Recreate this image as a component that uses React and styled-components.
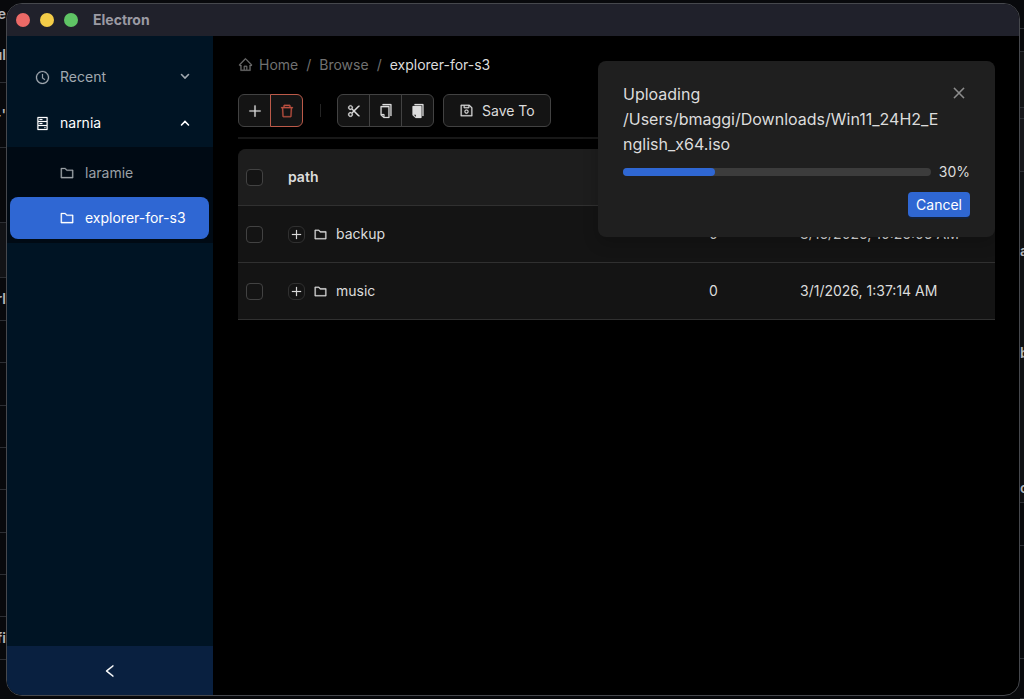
import React from "react";
import styled, { createGlobalStyle } from "styled-components";
import {
  AiOutlineClockCircle,
  AiOutlineHdd,
  AiOutlineFolder,
  AiOutlineHome,
  AiOutlinePlus,
  AiOutlineDelete,
  AiOutlineScissor,
  AiOutlineCopy,
  AiFillCopy,
  AiOutlineSave,
  AiOutlineLeft,
  AiOutlineClose,
} from "react-icons/ai";

const GlobalStyle = createGlobalStyle`
  * { box-sizing: border-box; }
  body {
    margin: 0;
    background: #08090c;
    color: #dcdcdc;
    font-family: Inter, "Liberation Sans", sans-serif;
    font-size: 14px;
    line-height: 22px;
  }
  button {
    font: inherit;
    color: inherit;
    cursor: pointer;
  }
  svg {
    flex: none;
    stroke-width: 16;
  }
`;

const Desktop = styled.div`
  display: grid;
  grid-template-columns: 6px 1fr 4px;
  height: 100vh;
  overflow: hidden;
`;

const Strip = styled.div`
  display: flex;
  flex-direction: column;
  overflow: hidden;
  min-width: 0;
`;

const StripCell = styled.div`
  display: flex;
  align-items: center;
  justify-content: ${({ $end }) => ($end ? "flex-end" : "flex-start")};
  flex: 0 0 ${({ $h }) => $h}px;
  border-bottom: ${({ $plain }) => ($plain ? "0" : "1px solid #2c2e33")};
  background: ${({ $bg }) => $bg || "transparent"};
  color: #b4b6ba;
  font-weight: 600;
  white-space: nowrap;
`;

const Window = styled.div`
  position: relative;
  display: flex;
  flex-direction: column;
  margin: 3px 0;
  border: 1px solid #46484d;
  border-radius: 16px;
  background: #000;
  overflow: hidden;
`;

const TitleBar = styled.header`
  display: flex;
  align-items: center;
  gap: 10px;
  flex: 0 0 32px;
  padding-left: 9px;
  background: #20212b;
`;

const Light = styled.button`
  width: 14px;
  height: 14px;
  padding: 0;
  border: 0;
  border-radius: 50%;
  background: ${({ $color }) => $color};
`;

const WindowTitle = styled.span`
  margin-left: 5px;
  color: #9b9aa3;
  font-weight: 700;
`;

const Body = styled.div`
  display: flex;
  flex: 1;
  min-height: 0;
`;

const Sider = styled.aside`
  display: flex;
  flex-direction: column;
  flex: 0 0 206px;
  background: #001424;
`;

const Menu = styled.nav`
  display: flex;
  flex-direction: column;
  flex: 1;
  padding-top: 18px;
`;

const MenuTitle = styled.button`
  display: flex;
  align-items: center;
  height: 46px;
  padding: 0 22px 0 28px;
  border: 0;
  background: none;
  color: ${({ $open }) => ($open ? "#fff" : "#a1a9b0")};
  text-align: left;

  span {
    flex: 1;
    margin-left: 10px;
  }
`;

const SubMenu = styled.div`
  display: flex;
  flex-direction: column;
  gap: 3px;
  margin-top: 1px;
  padding: 5px 4px 4px 3px;
  background: #000a14;
`;

const MenuItem = styled.a`
  display: flex;
  align-items: center;
  gap: 10px;
  height: 42px;
  padding-left: 49px;
  border-radius: 8px;
  background: ${({ $active }) => ($active ? "#2f67d3" : "transparent")};
  color: ${({ $active }) => ($active ? "#fff" : "#9aa0a6")};
  text-decoration: none;
`;

const Collapse = styled.button`
  display: flex;
  align-items: center;
  justify-content: center;
  flex: 0 0 49px;
  border: 0;
  background: #092040;
  color: #fff;
`;

const Main = styled.main`
  flex: 1;
  min-width: 0;
  padding: 16px 24px 0 25px;
`;

const Breadcrumb = styled.nav`
  display: flex;
  align-items: center;
  gap: 8px;
  height: 25px;
  color: #717171;

  a {
    display: flex;
    align-items: center;
    gap: 6px;
    color: inherit;
    text-decoration: none;
  }

  strong {
    color: #dcdcdc;
    font-weight: 400;
  }
`;

const Toolbar = styled.div`
  display: flex;
  align-items: center;
  margin-top: 17px;
  padding-bottom: 10px;
  border-bottom: 2px solid #181818;
`;

const Compact = styled.div`
  display: flex;
`;

const ToolButton = styled.button`
  position: relative;
  display: flex;
  align-items: center;
  justify-content: center;
  width: 33px;
  height: 33px;
  padding: 0;
  border: 1px solid ${({ $danger }) => ($danger ? "#bc5a49" : "#424242")};
  background: #141414;
  color: ${({ $danger }) => ($danger ? "#bc5140" : "#dcdcdc")};

  & + & {
    margin-left: -1px;
  }
  &:first-child {
    border-radius: 6px 0 0 6px;
  }
  &:last-child {
    border-radius: 0 6px 6px 0;
  }
`;

const Divider = styled.span`
  width: 1px;
  height: 13px;
  margin: 0 16px 0 17px;
  background: #242424;
`;

const SaveButton = styled.button`
  display: flex;
  align-items: center;
  gap: 8px;
  height: 33px;
  margin-left: 9px;
  padding: 0 15px;
  border: 1px solid #424242;
  border-radius: 6px;
  background: #141414;
  color: #dcdcdc;
`;

const Table = styled.table`
  width: 100%;
  margin-top: 10px;
  border-collapse: separate;
  border-spacing: 0;
  table-layout: fixed;
  background: #141414;
  border-radius: 8px 8px 0 0;

  th,
  td {
    height: 57px;
    padding: 0 8px;
    border-bottom: 1px solid #303030;
    text-align: left;
    white-space: nowrap;
  }
  th {
    background: #1d1d1d;
    font-weight: 600;
  }
  th:first-child {
    border-top-left-radius: 8px;
  }
  th:last-child {
    border-top-right-radius: 8px;
  }
`;

const CheckCol = styled.col`
  width: 42px;
`;

const SizeCol = styled.col`
  width: 91px;
`;

const DateCol = styled.col`
  width: 203px;
`;

const Check = styled.input.attrs({ type: "checkbox" })`
  display: block;
  width: 17px;
  height: 17px;
  margin: 0;
  appearance: none;
  border: 1px solid #424242;
  border-radius: 4px;
  background: #141414;
`;

const PathCell = styled.div`
  display: flex;
  align-items: center;
  gap: 8px;
`;

const Expand = styled.button`
  display: flex;
  align-items: center;
  justify-content: center;
  width: 17px;
  height: 17px;
  padding: 0;
  border: 1px solid #303030;
  border-radius: 6px;
  background: #141414;
`;

const Notice = styled.section`
  position: absolute;
  top: 57px;
  right: 24px;
  width: 397px;
  padding: 21px 25px 20px;
  border-radius: 8px;
  background: #1f1f1f;
  box-shadow: 0 6px 16px rgba(0, 0, 0, 0.2);
`;

const Message = styled.p`
  margin: 0;
  padding-right: 28px;
  font-size: 16px;
  line-height: 25px;
  word-break: break-all;
`;

const CloseButton = styled.button`
  position: absolute;
  top: 21px;
  right: 25px;
  display: flex;
  align-items: center;
  justify-content: center;
  width: 22px;
  height: 22px;
  padding: 0;
  border: 0;
  background: none;
  color: #8c8c8c;
`;

const ProgressRow = styled.div`
  display: flex;
  align-items: center;
  gap: 8px;
  margin-top: 4px;
`;

const Track = styled.div`
  flex: 1;
  height: 8px;
  border-radius: 4px;
  background: #3c3c3c;
`;

const Bar = styled.div`
  height: 8px;
  border-radius: 4px;
  background: #2f67d3;
`;

const Actions = styled.div`
  display: flex;
  justify-content: flex-end;
  margin-top: 9px;
`;

const CancelButton = styled.button`
  height: 25px;
  padding: 0 8px;
  border: 0;
  border-radius: 4px;
  background: #2f67d3;
  color: #fff;
  box-shadow: 0 2px 0 #14213a;
`;

const Arrow = styled.svg`
  fill: none;
  stroke: currentColor;
  stroke-width: 1.6;
  stroke-linecap: round;
`;

const leftCells = [
  { h: 28, text: "e", plain: true },
  { h: 55, text: "ul" },
  { h: 65, text: "-'" },
  { h: 75 },
  { h: 55, bg: "#121316" },
  { h: 43, text: "rl" },
  { h: 42 },
  { h: 43 },
  { h: 42 },
  { h: 42 },
  { h: 43 },
  { h: 42 },
  { h: 42 },
  { h: 43, text: "fi" },
  { h: 40 },
];

const rightCells = [
  { h: 29 },
  { h: 23 },
  { h: 56, bg: "#131416" },
  { h: 11, bg: "#17171b" },
  { h: 53, bg: "#17171b" },
  { h: 57, plain: true, bg: "#101215" },
  { h: 44, text: "a", plain: true, bg: "#101113" },
  { h: 160, text: "b", plain: true, bg: "#101113" },
  { h: 40, plain: true, bg: "#101113" },
  { h: 30, text: "o", bg: "#101113" },
  { h: 43 },
  { h: 113 },
  { h: 40 },
];

const rows = [
  { path: "backup", size: "0", modified: "3/16/2026, 10:26:06 AM" },
  { path: "music", size: "0", modified: "3/1/2026, 1:37:14 AM" },
];

function Chevron({ up }) {
  return (
    <Arrow width="12" height="12" viewBox="0 0 12 12" aria-hidden="true">
      <path d={up ? "M2.5 8 6 4.5 9.5 8" : "M2.5 3.5 6 7 9.5 3.5"} />
    </Arrow>
  );
}

function Sidebar() {
  return (
    <Sider>
      <Menu>
        <MenuTitle>
          <AiOutlineClockCircle size={15} />
          <span>Recent</span>
          <Chevron />
        </MenuTitle>
        <MenuTitle $open>
          <AiOutlineHdd size={15} />
          <span>narnia</span>
          <Chevron up />
        </MenuTitle>
        <SubMenu>
          <MenuItem href="#laramie">
            <AiOutlineFolder size={16} />
            laramie
          </MenuItem>
          <MenuItem href="#explorer-for-s3" $active>
            <AiOutlineFolder size={16} />
            explorer-for-s3
          </MenuItem>
        </SubMenu>
      </Menu>
      <Collapse aria-label="Collapse sidebar">
        <AiOutlineLeft size={16} />
      </Collapse>
    </Sider>
  );
}

function Upload({ percent }) {
  return (
    <Notice>
      <Message>
        Uploading
        <br />
        /Users/bmaggi/Downloads/Win11_24H2_English_x64.iso
      </Message>
      <CloseButton aria-label="Close">
        <AiOutlineClose size={16} />
      </CloseButton>
      <ProgressRow>
        <Track>
          <Bar style={{ width: `${percent}%` }} />
        </Track>
        <span>{percent}%</span>
      </ProgressRow>
      <Actions>
        <CancelButton>Cancel</CancelButton>
      </Actions>
    </Notice>
  );
}

export default function App() {
  return (
    <>
      <GlobalStyle />
      <Desktop>
        <Strip aria-hidden="true">
          {leftCells.map((cell, i) => (
            <StripCell key={i} $h={cell.h} $bg={cell.bg} $plain={cell.plain} $end>
              {cell.text}
            </StripCell>
          ))}
        </Strip>
        <Window>
          <TitleBar>
            <Light $color="#ec6a67" aria-label="Close window" />
            <Light $color="#f3cc48" aria-label="Minimize window" />
            <Light $color="#5fc465" aria-label="Zoom window" />
            <WindowTitle>Electron</WindowTitle>
          </TitleBar>
          <Body>
            <Sidebar />
            <Main>
              <Breadcrumb>
                <a href="#home">
                  <AiOutlineHome size={15} />
                  Home
                </a>
                <span>/</span>
                <a href="#browse">Browse</a>
                <span>/</span>
                <strong>explorer-for-s3</strong>
              </Breadcrumb>
              <Toolbar>
                <Compact>
                  <ToolButton aria-label="Add">
                    <AiOutlinePlus size={16} />
                  </ToolButton>
                  <ToolButton $danger aria-label="Delete">
                    <AiOutlineDelete size={16} />
                  </ToolButton>
                </Compact>
                <Divider />
                <Compact>
                  <ToolButton aria-label="Cut">
                    <AiOutlineScissor size={16} />
                  </ToolButton>
                  <ToolButton aria-label="Copy">
                    <AiOutlineCopy size={16} />
                  </ToolButton>
                  <ToolButton aria-label="Paste">
                    <AiFillCopy size={16} />
                  </ToolButton>
                </Compact>
                <SaveButton>
                  <AiOutlineSave size={15} />
                  Save To
                </SaveButton>
              </Toolbar>
              <Table>
                <colgroup>
                  <CheckCol />
                  <col />
                  <SizeCol />
                  <DateCol />
                </colgroup>
                <thead>
                  <tr>
                    <th>
                      <Check aria-label="Select all" />
                    </th>
                    <th>path</th>
                    <th></th>
                    <th></th>
                  </tr>
                </thead>
                <tbody>
                  {rows.map((row) => (
                    <tr key={row.path}>
                      <td>
                        <Check aria-label={`Select ${row.path}`} />
                      </td>
                      <td>
                        <PathCell>
                          <Expand aria-label={`Expand ${row.path}`}>
                            <AiOutlinePlus size={13} />
                          </Expand>
                          <AiOutlineFolder size={15} />
                          {row.path}
                        </PathCell>
                      </td>
                      <td>{row.size}</td>
                      <td>{row.modified}</td>
                    </tr>
                  ))}
                </tbody>
              </Table>
            </Main>
          </Body>
          <Upload percent={30} />
        </Window>
        <Strip aria-hidden="true">
          {rightCells.map((cell, i) => (
            <StripCell key={i} $h={cell.h} $bg={cell.bg} $plain={cell.plain}>
              {cell.text}
            </StripCell>
          ))}
        </Strip>
      </Desktop>
    </>
  );
}
